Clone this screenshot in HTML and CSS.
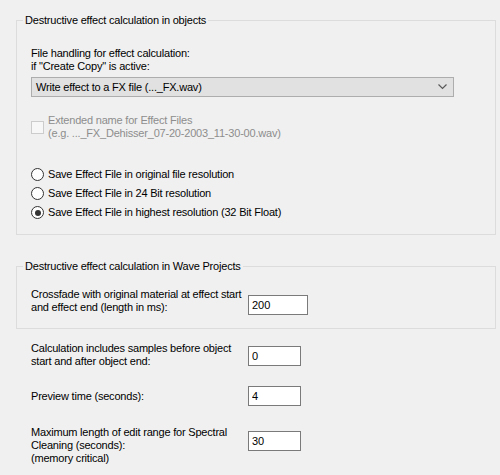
FILE: index.html
```html
<!DOCTYPE html>
<html lang="en">
<head>
    <meta charset="UTF-8">
    <title>Effect Calculation</title>
    <link rel="stylesheet" href="styles.css">
</head>
<body>
    <fieldset class="group group-objects">
        <legend>Destructive effect calculation in objects</legend>
        <p class="label">File handling for effect calculation:<br>if "Create Copy" is active:</p>
        <div class="combo">
            <span>Write effect to a FX file (..._FX.wav)</span>
            <svg width="9" height="6" viewBox="0 0 9 6"><path d="M0.5 0.5 L4.5 4.5 L8.5 0.5" fill="none" stroke="#5a5a5a" stroke-width="1.2"/></svg>
        </div>
        <label class="check disabled">
            <input type="checkbox" disabled>
            <span>Extended name for Effect Files<br>(e.g. ..._FX_Dehisser_07-20-2003_11-30-00.wav)</span>
        </label>
        <div class="radios">
            <label class="radio"><input type="radio" name="res"><span>Save Effect File in original file resolution</span></label>
            <label class="radio"><input type="radio" name="res"><span>Save Effect File in 24 Bit resolution</span></label>
            <label class="radio"><input type="radio" name="res" checked><span>Save Effect File in highest resolution (32 Bit Float)</span></label>
        </div>
    </fieldset>

    <fieldset class="group group-wave">
        <legend>Destructive effect calculation in Wave Projects</legend>
        <div class="row">
            <p class="label row-label">Crossfade with original material at effect start<br>and effect end (length in ms):</p>
            <input class="num num-wide" type="text" value="200">
        </div>
    </fieldset>

    <div class="settings">
        <div class="row row-samples">
            <p class="label row-label">Calculation includes samples before object<br>start and after object end:</p>
            <input class="num" type="text" value="0">
        </div>
        <div class="row row-preview">
            <p class="label row-label">Preview time (seconds):</p>
            <input class="num" type="text" value="4">
        </div>
        <div class="row row-spectral">
            <p class="label row-label">Maximum length of edit range for Spectral<br>Cleaning (seconds):<br>(memory critical)</p>
            <input class="num" type="text" value="30">
        </div>
    </div>
</body>
</html>
```

FILE: styles.css
```css
body {
    margin: 0;
    padding-top: 14px;
    background-color: #f0f0f0;
    color: #000000;
    font-family: "Liberation Sans", Arial, sans-serif;
    font-size: 11px;
    line-height: 13px;
    letter-spacing: -0.2px;
}

p {
    margin: 0;
}

.label {
    white-space: nowrap;
}

.group {
    margin: 0 4px 0 16px;
    padding: 0 0 0 14px;
    border: 1px solid #dcdcdc;
    min-width: 0;
}

.group legend {
    padding: 0 2px;
    margin-left: -8px;
    line-height: 13px;
}

.group-objects {
    padding-top: 20px;
    padding-bottom: 15px;
}

.group-wave {
    margin-top: 25px;
    padding-top: 15px;
    padding-bottom: 13px;
}

/* combo box */
.combo {
    display: flex;
    align-items: center;
    justify-content: space-between;
    box-sizing: border-box;
    width: 423px;
    height: 20px;
    margin-top: 4px;
    padding: 0 6px 0 4px;
    background-color: #e1e1e1;
    border: 1px solid #adadad;
}

.combo svg {
    display: block;
}

/* checkbox and radios */
.check,
.radio {
    display: flex;
    align-items: center;
    gap: 4px;
    white-space: nowrap;
}

.check {
    margin-top: 17px;
}

.check.disabled {
    color: #8d8d8d;
}

.check input,
.radio input {
    appearance: none;
    margin: 0;
    width: 13px;
    height: 13px;
    flex: none;
    box-sizing: border-box;
}

.check input {
    border: 1px solid #cccccc;
    background-color: #f7f7f7;
}

.radios {
    display: flex;
    flex-direction: column;
    gap: 6px;
    margin-top: 28px;
}

.radio input {
    border: 1px solid #333333;
    border-radius: 50%;
    background-color: #ffffff;
    position: relative;
}

.radio input:checked::after {
    content: "";
    position: absolute;
    left: 2.5px;
    top: 2.5px;
    width: 6px;
    height: 6px;
    border-radius: 50%;
    background-color: #333333;
}

/* label + number field rows */
.row {
    display: flex;
    align-items: flex-start;
}

.row-label {
    width: 217px;
    flex: none;
}

.num {
    box-sizing: border-box;
    width: 53px;
    height: 20px;
    margin: 0;
    padding: 0 3px;
    border: 1px solid #7a7a7a;
    background-color: #ffffff;
    font-family: inherit;
    font-size: 11px;
    color: #000000;
    outline: none;
}

.num-wide {
    width: 60px;
    margin-top: 7px;
}

.settings {
    padding-left: 31px;
    margin-top: 13px;
}

.row-samples .num {
    margin-top: 4px;
}

.row-preview {
    margin-top: 18px;
    align-items: center;
}

.row-spectral {
    margin-top: 20px;
}

.row-spectral .num {
    margin-top: 5px;
}
```
